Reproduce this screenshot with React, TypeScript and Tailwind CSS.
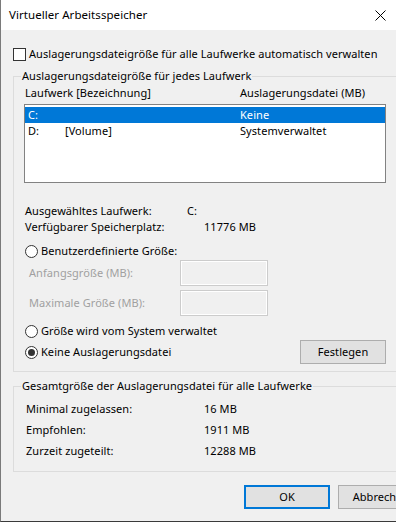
import React from "react";

const FONT = "font-['Noto_Sans','Open_Sans',sans-serif]";

function Radio({ checked }: { checked?: boolean }) {
  return (
    <span className="w-[13px] h-[13px] rounded-full border border-[#333333] bg-white flex items-center justify-center shrink-0">
      {checked && <span className="w-[7px] h-[7px] rounded-full bg-[#333333]" />}
    </span>
  );
}

function Btn({ children, focused }: { children: React.ReactNode; focused?: boolean }) {
  return (
    <button
      className={`w-[86px] h-[24px] shrink-0 bg-[#e1e1e1] flex items-center justify-center text-black ${
        focused ? "border-2 border-[#0078d7]" : "border border-[#adadad]"
      }`}
    >
      {children}
    </button>
  );
}

export default function App() {
  return (
    <div className={`w-[396px] h-[522px] overflow-hidden bg-[#f0f0f0] border-l border-b border-l-[#7a7a7a] border-b-[#3a3a3a] text-[11px] tracking-[0.06px] leading-4 text-black ${FONT}`}>
      <div className="w-[412px]">
        {/* title bar */}
        <div className="h-[30px] bg-white flex items-center pl-[8px]">
          <span className="text-[11.5px]">Virtueller Arbeitsspeicher</span>
          <svg className="ml-auto mr-[27px]" width="11" height="11" viewBox="0 0 11 11">
            <path d="M0.5 0.5 L10.5 10.5 M10.5 0.5 L0.5 10.5" stroke="#000" strokeWidth="1" />
          </svg>
        </div>

        {/* auto checkbox */}
        <div className="mt-[16px] ml-[12px] h-4 flex items-center gap-[3px]">
          <span className="w-[13px] h-[13px] border border-[#333333] bg-white shrink-0" />
          <span>Auslagerungsdateigröße für alle Laufwerke automatisch verwalten</span>
        </div>

        {/* per drive group */}
        <fieldset className="mt-[6px] ml-[12px] w-[386px] border border-[#dcdcdc] pb-[7px]">
          <legend className="ml-[7px] px-[1px]">Auslagerungsdateigröße für jedes Laufwerk</legend>
          <div className="mt-[1px] pl-[11px] flex">
            <span className="w-[215px]">Laufwerk [Bezeichnung]</span>
            <span>Auslagerungsdatei (MB)</span>
          </div>
          <div className="mt-[3px] ml-[10px] w-[362px] h-[79px] border border-[#828282] bg-white pt-[2px]">
            <div className="h-4 flex pl-[3px] bg-[#0078d7] text-white">
              <span className="w-[212px]">C:</span>
              <span>Keine</span>
            </div>
            <div className="h-4 flex pl-[3px]">
              <span className="w-[37px]">D:</span>
              <span className="w-[175px]">[Volume]</span>
              <span>Systemverwaltet</span>
            </div>
          </div>

          <div className="mt-[20px] pl-[11px] flex">
            <span className="w-[162px]">Ausgewähltes Laufwerk:</span>
            <span>C:</span>
          </div>
          <div className="pl-[11px] flex">
            <span className="w-[179px]">Verfügbarer Speicherplatz:</span>
            <span>11776 MB</span>
          </div>

          <div className="mt-[8px] pl-[11px] h-4 flex items-center gap-[3px]">
            <Radio />
            <span>Benutzerdefinierte Größe:</span>
          </div>
          <div className="mt-[1px] pl-[15px] h-[26px] flex items-center text-[#a0a0a0]">
            <span className="w-[151px]">Anfangsgröße (MB):</span>
            <span className="w-[88px] h-[26px] border border-[#cccccc] bg-[#f0f0f0] shadow-[inset_0_0_0_1px_#ffffff]" />
          </div>
          <div className="mt-[4px] pl-[15px] h-[26px] flex items-center text-[#a0a0a0]">
            <span className="w-[151px]">Maximale Größe (MB):</span>
            <span className="w-[88px] h-[26px] border border-[#cccccc] bg-[#f0f0f0] shadow-[inset_0_0_0_1px_#ffffff]" />
          </div>

          <div className="mt-[7px] pl-[11px] h-4 flex items-center gap-[3px]">
            <Radio />
            <span>Größe wird vom System verwaltet</span>
          </div>
          <div className="mt-[1px] pl-[11px] h-[24px] flex items-center">
            <div className="w-[275px] flex items-center gap-[3px]">
              <Radio checked />
              <span>Keine Auslagerungsdatei</span>
            </div>
            <Btn>Festlegen</Btn>
          </div>
        </fieldset>

        {/* totals group */}
        <fieldset className="mt-[6px] ml-[12px] w-[386px] border border-[#dcdcdc] pb-[12px]">
          <legend className="ml-[7px] px-[1px]">Gesamtgröße der Auslagerungsdatei für alle Laufwerke</legend>
          {[
            ["Minimal zugelassen:", "16 MB"],
            ["Empfohlen:", "1911 MB"],
            ["Zurzeit zugeteilt:", "12288 MB"],
          ].map(([k, v], i) => (
            <div key={k} className={`pl-[12px] flex ${i === 0 ? "mt-[7px]" : "mt-[5px]"}`}>
              <span className="w-[178px]">{k}</span>
              <span>{v}</span>
            </div>
          ))}
        </fieldset>

        {/* dialog buttons */}
        <div className="mt-[13px] ml-[243px] flex gap-[8px]">
          <Btn focused>OK</Btn>
          <Btn>Abbrechen</Btn>
        </div>
      </div>
    </div>
  );
}
